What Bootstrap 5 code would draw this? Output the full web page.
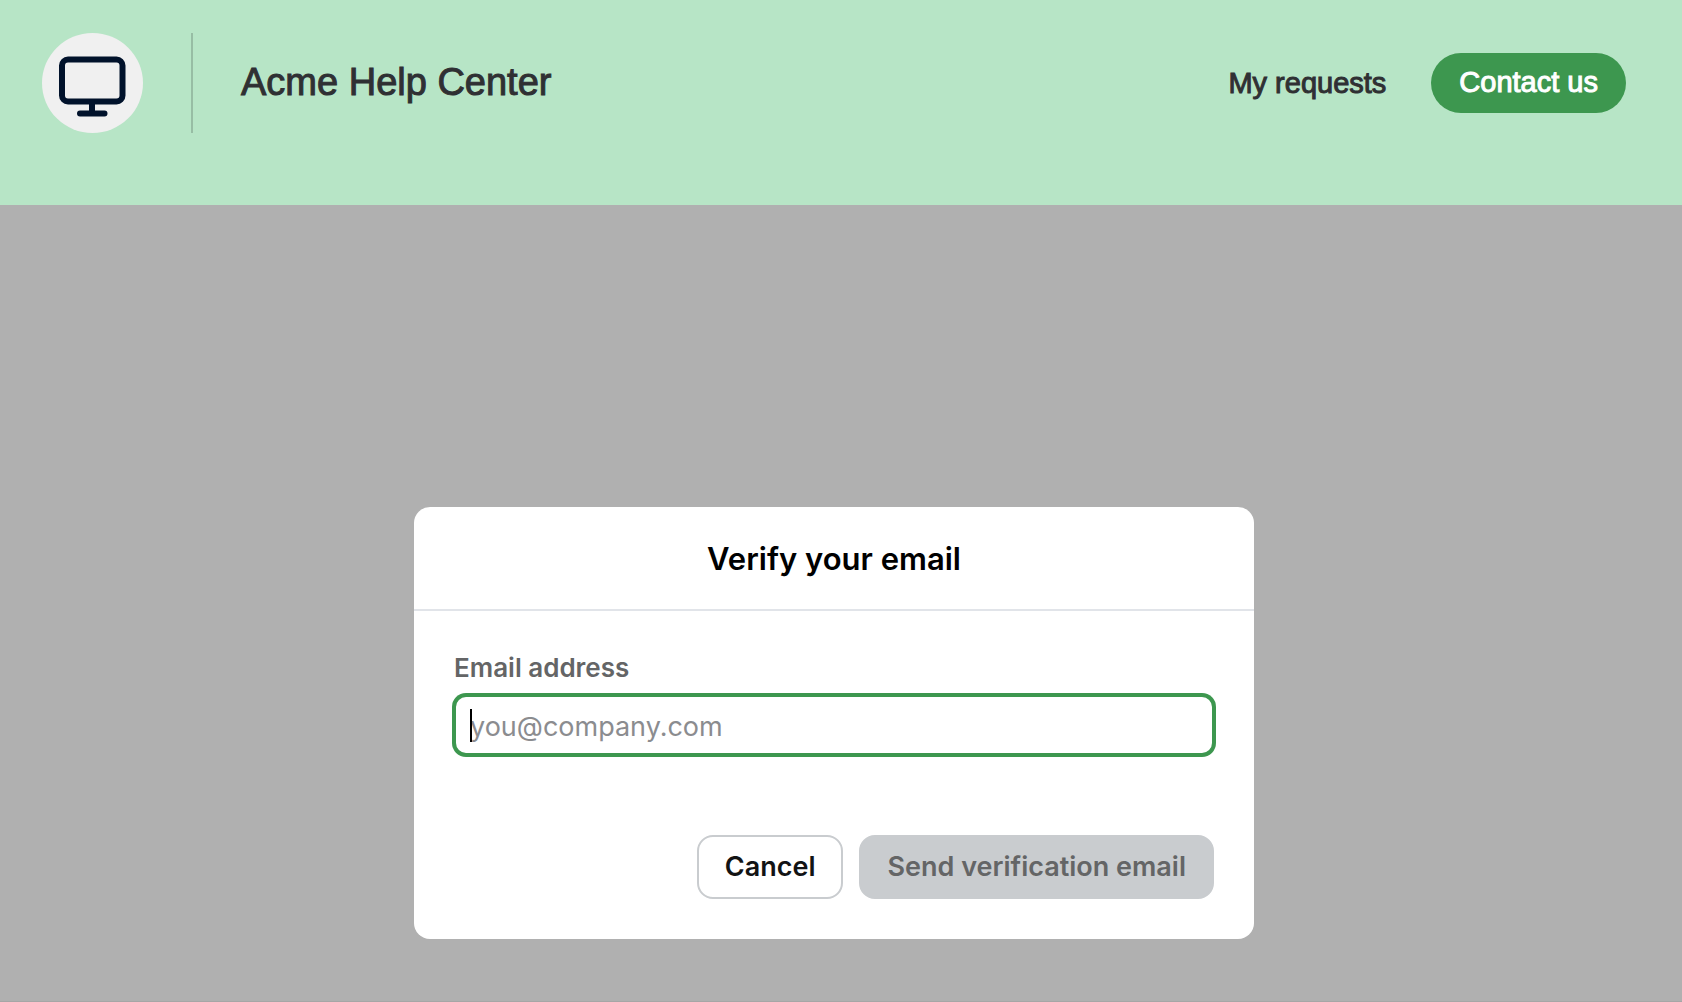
<!DOCTYPE html>
<html lang="en">
<head>
<meta charset="utf-8">
<meta name="viewport" content="width=device-width, initial-scale=1">
<title>Acme Help Center</title>
<link href="https://cdn.jsdelivr.net/npm/bootstrap@5.3.0/dist/css/bootstrap.min.css" rel="stylesheet">
<style>
  body { font-family: Inter, "Liberation Sans", sans-serif; background: #b0b0b0; color: #2f3033; }
  .help-header { background: #b7e5c6; padding: 33px 56px 72px 42px; font-family: "Liberation Sans", sans-serif; }
  .brand-logo { width: 101px; height: 100px; }
  .brand-rule { width: 2px; background: #97bda4; margin: 0 48px; }
  .brand-name { font-size: 38px; line-height: 48px; padding-bottom: 2px; color: #2f3033; -webkit-text-stroke: 1px; }
  .header-nav { gap: 45px; }
  .header-link { font-size: 29px; line-height: 36px; color: #2f3033; -webkit-text-stroke: 1px; }
  .btn-contact { --bs-btn-color: #fff; --bs-btn-bg: #3d974f; --bs-btn-hover-color: #fff; --bs-btn-hover-bg: #34853f; font-size: 29px; line-height: 36px; padding: 11px 28px 13px; border: 0; -webkit-text-stroke: 1px; }
  .help-main { padding: 302px 14px 62px 0; border-bottom: 1px solid #a6a6a6; }
  .verify-dialog { width: 100%; max-width: 840px; border-radius: 16px; }
  .verify-title { font-size: 31px; line-height: 40px; padding: 32px 40px 30px; border-bottom: 2px solid #e1e4e9; color: #000; }
  .verify-body { padding: 40px; }
  .field-label { font-size: 26px; line-height: 34px; color: #646566; margin-bottom: 10px; }
  .field-email { height: 60px; font-size: 27px; padding: 2px 14px 0; border: 2px solid #3d974f; border-radius: 12px; caret-color: transparent; }
  .field-email, .field-email:focus { border-color: #3d974f; box-shadow: 0 0 0 2px #3d974f; }
  .field-email::placeholder { color: #8b8c8f; }
  .field-caret { left: 16px; top: 14px; width: 2px; height: 33px; background: #000; }
  .verify-actions { margin-top: 80px; gap: 16px; }
  .verify-actions .btn { height: 64px; font-size: 27px; border-radius: 16px; border-width: 2px; padding: 0 26px; }
  .btn-cancel { --bs-btn-color: #121314; --bs-btn-bg: #fff; --bs-btn-border-color: #c9cccf; --bs-btn-hover-bg: #f4f5f6; --bs-btn-hover-border-color: #c9cccf; }
  .btn-send { --bs-btn-disabled-color: #646566; --bs-btn-disabled-bg: #c9cccf; --bs-btn-disabled-border-color: #c9cccf; --bs-btn-disabled-opacity: 1; }
</style>
</head>
<body>
<header class="help-header d-flex justify-content-between align-items-center">
  <div class="d-flex align-items-center">
    <svg class="brand-logo" viewBox="0 0 101 100" role="img" aria-label="Acme">
      <ellipse cx="50.500" cy="50" rx="50.500" ry="50" fill="#f0f0f0"/>
      <g fill="none" stroke="#01122b" stroke-width="6" stroke-linecap="round">
        <rect x="20" y="26.500" width="60.500" height="42" rx="6"/>
        <path d="M50 69v11M38 80.500h24.500"/>
      </g>
    </svg>
    <div class="brand-rule align-self-stretch"></div>
    <a href="#" class="brand-name text-decoration-none">Acme Help Center</a>
  </div>
  <nav class="header-nav d-flex align-items-center">
    <a href="#" class="header-link text-decoration-none">My requests</a>
    <button type="button" class="btn btn-contact rounded-pill">Contact us</button>
  </nav>
</header>
<main class="help-main d-flex justify-content-center">
  <form class="verify-dialog bg-white" role="dialog" aria-labelledby="verify-title">
    <h1 id="verify-title" class="verify-title text-center fw-semibold mb-0">Verify your email</h1>
    <div class="verify-body">
      <label for="email" class="field-label d-block fw-semibold">Email address</label>
      <div class="position-relative">
        <input id="email" type="email" class="form-control field-email" placeholder="you@company.com">
        <span class="field-caret position-absolute"></span>
      </div>
      <div class="verify-actions d-flex justify-content-end">
        <button type="button" class="btn btn-cancel fw-semibold">Cancel</button>
        <button type="submit" class="btn btn-send fw-semibold" disabled>Send verification email</button>
      </div>
    </div>
  </form>
</main>
<script src="https://cdn.jsdelivr.net/npm/bootstrap@5.3.0/dist/js/bootstrap.bundle.min.js"></script>
</body>
</html>
